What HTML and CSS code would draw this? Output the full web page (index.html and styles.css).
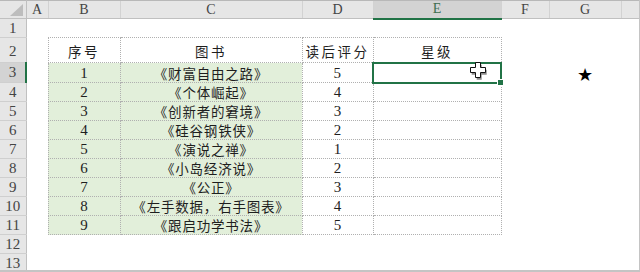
FILE: index.html
```html
<!DOCTYPE html>
<html lang="zh-CN">
<head>
  <meta charset="UTF-8" />
  <title>读后评分</title>
  <link rel="stylesheet" href="styles.css">
</head>
<body>
  <div class="sheet">
    <table class="grid">
      <colgroup>
        <col class="c-rh"><col class="c-a"><col class="c-b"><col class="c-c"><col class="c-d"><col class="c-e"><col class="c-f"><col class="c-g"><col class="c-h">
      </colgroup>
      <tr class="r-head">
        <th class="corner"><span class="tri"></span></th>
        <th class="ch">A</th><th class="ch">B</th><th class="ch">C</th><th class="ch">D</th>
        <th class="ch ch-on">E</th><th class="ch">F</th><th class="ch">G</th><th class="ch"></th>
      </tr>
      <tr class="r1">
        <th class="rh">1</th><td></td><td></td><td></td><td></td><td></td><td></td><td></td><td></td>
      </tr>
      <tr class="r2">
        <th class="rh">2</th><td></td>
        <td class="t hd">序号</td><td class="t hd">图书</td><td class="t hd">读后评分</td><td class="t hd">星级</td>
        <td></td><td></td><td></td>
      </tr>
      <tr>
        <th class="rh rh-on">3</th><td></td>
        <td class="t g num">1</td><td class="t g">《财富自由之路》</td><td class="t num">5</td>
        <td class="t sel"><span class="fill-handle"></span></td>
        <td></td><td class="star">★</td><td></td>
      </tr>
      <tr>
        <th class="rh">4</th><td></td>
        <td class="t g num">2</td><td class="t g">《个体崛起》</td><td class="t num">4</td><td class="t"></td>
        <td></td><td></td><td></td>
      </tr>
      <tr>
        <th class="rh">5</th><td></td>
        <td class="t g num">3</td><td class="t g">《创新者的窘境》</td><td class="t num">3</td><td class="t"></td>
        <td></td><td></td><td></td>
      </tr>
      <tr>
        <th class="rh">6</th><td></td>
        <td class="t g num">4</td><td class="t g">《硅谷钢铁侠》</td><td class="t num">2</td><td class="t"></td>
        <td></td><td></td><td></td>
      </tr>
      <tr>
        <th class="rh">7</th><td></td>
        <td class="t g num">5</td><td class="t g">《演说之禅》</td><td class="t num">1</td><td class="t"></td>
        <td></td><td></td><td></td>
      </tr>
      <tr>
        <th class="rh">8</th><td></td>
        <td class="t g num">6</td><td class="t g">《小岛经济说》</td><td class="t num">2</td><td class="t"></td>
        <td></td><td></td><td></td>
      </tr>
      <tr>
        <th class="rh">9</th><td></td>
        <td class="t g num">7</td><td class="t g">《公正》</td><td class="t num">3</td><td class="t"></td>
        <td></td><td></td><td></td>
      </tr>
      <tr>
        <th class="rh">10</th><td></td>
        <td class="t g num">8</td><td class="t g">《左手数据，右手图表》</td><td class="t num">4</td><td class="t"></td>
        <td></td><td></td><td></td>
      </tr>
      <tr>
        <th class="rh">11</th><td></td>
        <td class="t g num">9</td><td class="t g">《跟启功学书法》</td><td class="t num">5</td><td class="t"></td>
        <td></td><td></td><td></td>
      </tr>
      <tr>
        <th class="rh">12</th><td></td><td></td><td></td><td></td><td></td><td></td><td></td><td></td>
      </tr>
      <tr>
        <th class="rh">13</th><td></td><td></td><td></td><td></td><td></td><td></td><td></td><td></td>
      </tr>
    </table>

    <!-- mouse pointer over E3 -->
    <svg class="pointer" width="20" height="19" viewBox="0 0 20 19">
      <path d="M7.5 2.5h5v5h5v5h-5v5h-5v-5h-5v-5h5z" fill="#8c8c8c" transform="translate(1.2 1.2)"/>
      <path d="M7.5 1.5h5v5h5v5h-5v5h-5v-5h-5v-5h5z" fill="#fff" stroke="#111" stroke-width="1"/>
    </svg>
  </div>
</body>
</html>
```

FILE: styles.css
```css
html, body {
  margin: 0; padding: 0;
  background: #fff;
}

.sheet {
  position: relative;
  width: 639px; height: 270px;
  border-right: 1px solid #c4c4c4;
  border-bottom: 2px solid #c4c4c4;
  overflow: hidden;
}

.grid {
  border-collapse: collapse;
  table-layout: fixed;
  width: 639px;
  font-family: "Liberation Serif", "Noto Sans CJK SC", serif;
  color: #222;
}

.c-rh { width: 26px; }
.c-a  { width: 22px; }
.c-b  { width: 72px; }
.c-c  { width: 182px; }
.c-d  { width: 71px; }
.c-e  { width: 128px; }
.c-f  { width: 48px; }
.c-g  { width: 72px; }
.c-h  { width: 18px; }

.grid th, .grid td {
  padding: 0;
  text-align: center;
  vertical-align: middle;
  white-space: nowrap;
  overflow: visible;
}

.grid tr { height: 19px; }
.grid tr.r-head { height: 18px; }
.grid tr.r2 { height: 25px; }

/* column letters */
.ch {
  background: #e6e6e6;
  border-top: 1px solid #b8b8b8;
  border-bottom: 1px solid #c0c0c0;
  border-left: 1px solid #d2d2d2;
  font-weight: normal;
  font-size: 14px;
  color: #444;
}
.ch-on {
  background: #d3d3d3;
  color: #3c6e4f;
  border-bottom: 2px solid #217346;
}

.corner {
  position: relative;
  background: #e6e6e6;
  border-top: 1px solid #b8b8b8;
  border-right: 1px solid #c0c0c0;
  border-bottom: 1px solid #c0c0c0;
}
.corner .tri {
  position: absolute; right: 3px; bottom: 2px;
  width: 0; height: 0;
  border-left: 13px solid transparent;
  border-bottom: 12px solid #bdbdbd;
}

/* row numbers */
.rh {
  background: #e6e6e6;
  border-right: 1px solid #c0c0c0;
  border-bottom: 1px solid #cfcfcf;
  font-weight: normal;
  font-size: 15px;
  color: #444;
}
.rh-on {
  background: #d3d3d3;
  border-right: 2px solid #217346;
}
.r2 .rh { vertical-align: bottom; padding-bottom: 2px; }

/* data range B2:E11 */
.t {
  border: 1px dotted #b0b0b0;
  font-family: "Noto Sans CJK SC", sans-serif;
  font-size: 13.5px;
  letter-spacing: 0.8px;
  line-height: 16px;
  color: #1e1e1e;
}
.t.hd {
  vertical-align: bottom;
  padding-bottom: 3px;
  letter-spacing: 2.5px;
}
.t.num {
  font-family: "Liberation Serif", serif;
  font-size: 15px;
  letter-spacing: 0;
}
.t.g { background: #e2efda; }

.t.sel {
  position: relative;
  border: 2px solid #217346;
}
.fill-handle {
  position: absolute; right: -4px; bottom: -4px;
  width: 5px; height: 5px;
  background: #217346;
  border: 1px solid #fff;
}

.star {
  font-family: "DejaVu Sans", sans-serif;
  font-size: 18px;
  line-height: 16px;
  color: #000;
  padding-top: 4px !important;
}

.pointer {
  position: absolute; left: 468px; top: 61px;
}
```
